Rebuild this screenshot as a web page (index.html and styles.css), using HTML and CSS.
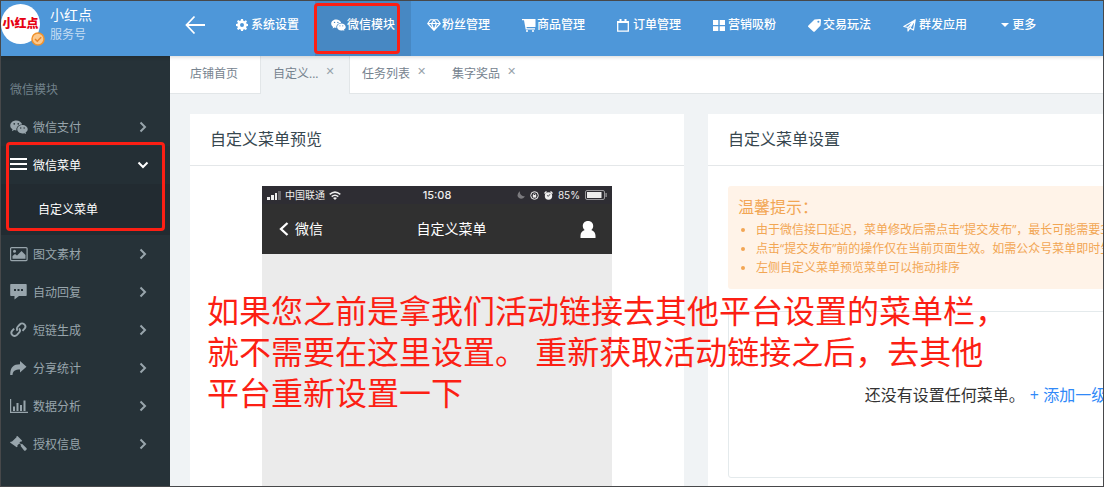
FILE: index.html
```html
<!DOCTYPE html>
<html lang="zh-CN">
<head>
<meta charset="utf-8">
<title>自定义菜单</title>
<link rel="stylesheet" href="styles.css">
</head>
<body>
<svg class="defs" aria-hidden="true">
  <symbol id="wechat" viewBox="0 0 36 28">
    <path fill-rule="evenodd" d="M12.500 1C5.800 1 .5 5.500.5 11c0 3.200 1.700 5.900 4.500 7.700L3.800 22.500l4.400-2.300c1.500.5 3 .7 4.800.7-1.400-6.500 4.200-12 11.400-12C23.300 4.400 18.400 1 12.500 1zM8.500 6a1.700 1.700 0 1 1 0 3.400a1.700 1.700 0 0 1 0-3.400zM16.500 6a1.700 1.700 0 1 1 0 3.400a1.700 1.700 0 0 1 0-3.400z"/>
    <path fill-rule="evenodd" d="M24.800 10.200c-5.900 0-10.300 3.900-10.300 8.500s4.600 8.400 10.300 8.400c1.300 0 2.600-.3 3.800-.6l3.500 1.500-.9-3c2.500-1.600 4.200-3.800 4.200-6.400 0-4.500-4.800-8.400-10.600-8.400zM21.500 14.500a1.400 1.400 0 1 1 0 2.800a1.400 1.400 0 0 1 0-2.800zM28.300 14.500a1.400 1.400 0 1 1 0 2.800a1.400 1.400 0 0 1 0-2.800z"/>
  </symbol>
  <symbol id="chevron" viewBox="0 0 8 12"><path d="M1.500 1.500 6 6l-4.500 4.500" fill="none" stroke="currentColor" stroke-width="2"/></symbol>
</svg>
<div class="app">
  <header class="topbar">
    <div class="account">
      <div class="avatar">小红点
        <svg class="verified" viewBox="0 0 14 14"><circle cx="7" cy="7" r="6" fill="#fdc98c" stroke="#f0932f" stroke-width="1.500"/><path d="m4 7 2.300 2.300 3.900-4" fill="none" stroke="#e8862a" stroke-width="1.500"/></svg>
      </div>
      <div class="account-text"><strong>小红点</strong><span>服务号</span></div>
    </div>
    <button class="back" aria-label="返回"><svg viewBox="0 0 20 20"><path d="M20 10H1.500M9.500 1.500 1.500 10l8 8.500" fill="none" stroke="currentColor" stroke-width="1.800"/></svg></button>
    <nav class="mainnav">
      <a href="#"><span class="ico"><svg width="12" height="12" viewBox="0 0 24 24"><path fill-rule="evenodd" d="M10 0h4l.6 3.600 2 .8L19.600 2.300l2.400 2.400-1.700 3 .8 2L24 10v4l-3 .6-.8 2 1.800 2.800-2.600 2.600-2.800-1.700-2 .8L14 24h-4l-.6-3-2-.8-2.800 1.800L2 19.400l1.700-2.800-.8-2L0 14v-4l3-.5.8-2L2 4.600 4.600 2l2.900 1.800 2-.8zM12 8a4 4 0 1 0 0 8a4 4 0 0 0 0-8z"/></svg></span>系统设置</a>
      <a href="#" class="active"><span class="ico wide"><svg width="15" height="12"><use href="#wechat"/></svg></span>微信模块</a>
      <a href="#"><span class="ico"><svg width="14" height="12" viewBox="0 0 28 24"><path d="M7 1.500h14L26.500 9 14 22.500 1.500 9zM1.500 9h25M14 2 9 9l5 13 5-13-5-7" fill="none" stroke="currentColor" stroke-width="2.400" stroke-linejoin="round"/></svg></span>粉丝管理</a>
      <a href="#"><span class="ico"><svg width="14" height="13" viewBox="0 0 14 13"><path d="M0 0h13.500v8H4.500l.3 1.300H13v1.200H3.700L2 1.300H0z"/><circle cx="5" cy="12" r="1"/><circle cx="11" cy="12" r="1"/></svg></span>商品管理</a>
      <a href="#"><span class="ico wide"><svg width="12" height="13" viewBox="0 0 12 13"><path d="M.7 3h10.600v9.200H.7z" fill="none" stroke="currentColor" stroke-width="1.300"/><path d="M0 2h12v2H0zM2.500 0h2v3h-2zM7.500 0h2v3h-2z"/></svg></span>订单管理</a>
      <a href="#"><span class="ico"><svg width="12" height="11" viewBox="0 0 12 11"><path d="M0 0h5.300v5H0zM6.700 0H12v5H6.700zM0 6.200h5.300v4.800H0zM6.700 6.200H12v4.800H6.700z"/></svg></span>营销吸粉</a>
      <a href="#"><span class="ico"><svg width="13" height="13" viewBox="0 0 13 13"><path fill-rule="evenodd" d="M6.500.5 12 0q1 0 1 1l-.4 5.500-5.800 6q-.8.7-1.600 0L.4 8q-.8-.8 0-1.600zM10.300 1.700a1 1 0 1 0 .1 2a1 1 0 0 0 0-2z"/></svg></span>交易玩法</a>
      <a href="#"><span class="ico wide"><svg width="13" height="13" viewBox="0 0 13 13"><path d="M.8 7.500 12.200.9l-1.700 10-3.600-1.700L5 12V8.500zM5 8.500l7-7.500-5 8" fill="none" stroke="currentColor" stroke-width="1.200" stroke-linejoin="round"/></svg></span>群发应用</a>
      <a href="#"><span class="ico small"><svg width="8" height="4" viewBox="0 0 8 4"><path d="M0 0h8L4 4z"/></svg></span>更多</a>
    </nav>
  </header>
  <div class="body">
    <aside class="sidebar">
      <h2>微信模块</h2>
      <ul>
        <li><a href="#"><svg class="lead" viewBox="0 0 36 28"><use href="#wechat"/></svg><span>微信支付</span><svg class="arrow"><use href="#chevron"/></svg></a></li>
        <li class="open"><a href="#"><svg class="lead" viewBox="0 0 18 16"><path d="M0 1h17v2H0zM0 6h17v2H0zM0 11h17v2H0z"/></svg><span>微信菜单</span><svg class="arrow down"><use href="#chevron"/></svg></a>
          <ul><li><a href="#"><span>自定义菜单</span></a></li></ul>
        </li>
        <li><a href="#"><svg class="lead" viewBox="0 0 18 16"><rect x=".6" y="1.600" width="16.500" height="13" rx="1" fill="none" stroke="currentColor" stroke-width="1.200"/><circle cx="4.500" cy="5.200" r="1.500"/><path d="M2.500 12.800V10L5 8l2 1.500L11.500 5l4 4v3.800z"/></svg><span>图文素材</span><svg class="arrow"><use href="#chevron"/></svg></a></li>
        <li><a href="#"><svg class="lead" viewBox="0 0 18 16"><path fill-rule="evenodd" d="M1 0h15q.7 0 .7.700v10.600q0 .7-.7.700H9l-4.500 3.500V12H1q-.8 0-.8-.7V.7Q.2 0 1 0zM4 5v2h2V5zM7.500 5v2h2V5zM11 5v2h2V5z"/></svg><span>自动回复</span><svg class="arrow"><use href="#chevron"/></svg></a></li>
        <li><a href="#"><svg class="lead" viewBox="0 0 18 16"><path d="M7.500 8.700C6.500 7 6.800 5.600 8 4.400l1.800-1.900c2.800-2.800 7.300.7 4.900 4L12.500 8.800M9 6.400c1.400 1.400 1.300 3 0 4.300l-2 2.200c-2.800 2.800-7.300-.7-4.900-4l2-2.200" fill="none" stroke="currentColor" stroke-width="1.900"/></svg><span>短链生成</span><svg class="arrow"><use href="#chevron"/></svg></a></li>
        <li><a href="#"><svg class="lead" viewBox="0 0 18 16"><path d="M10 1v3.200C3.500 4.200.2 7 .2 15h2.300c.3-4 2.500-5.600 7.500-5.600v3.200L16.500 6.700z"/></svg><span>分享统计</span><svg class="arrow"><use href="#chevron"/></svg></a></li>
        <li><a href="#"><svg class="lead" viewBox="0 0 18 16"><path d="M0 1h1.200v12.800H18V15H0zM3 8.500h2V13H3zM6.500 5h2v8h-2zM10 7h2v6h-2zM13.500 2.500h2V13h-2z"/></svg><span>数据分析</span><svg class="arrow"><use href="#chevron"/></svg></a></li>
        <li><a href="#"><svg class="lead" viewBox="0 0 18 16"><path d="m7.500 0 4.700 4.700-1 1-.6-.3-1.200 1.300 1.700 1.600.9-.6 4.600 4.500q.5.700-.2 1.500l-.8.800q-.8.700-1.500 0L10.600 10l.4-1-1.700-1.500-2 2.100.4.700-1 1L0 6.600l1-1 .8.200 4.700-4.600-.2-.6z"/></svg><span>授权信息</span><svg class="arrow"><use href="#chevron"/></svg></a></li>
      </ul>
    </aside>
    <main class="main">
      <div class="tabs">
        <div class="tab home"><a href="#">店铺首页</a></div>
        <div class="tab current"><a href="#">自定义...</a><button aria-label="关闭自定义菜单">✕</button></div>
        <div class="tab"><a href="#">任务列表</a><button aria-label="关闭任务列表">✕</button></div>
        <div class="tab"><a href="#">集字奖品</a><button aria-label="关闭集字奖品">✕</button></div>
      </div>
      <div class="panels">
        <section class="card">
          <h3>自定义菜单预览</h3>
          <div class="card-body">
            <div class="phone">
              <div class="status">
                <div class="status-left">
                  <svg width="14" height="9" viewBox="0 0 14 9"><path d="M0 6h3v3H0zM4 4h3v5H4zM8 2h2v7H8z"/><path d="M11 0h3v9h-3z" opacity=".3"/></svg>
                  <span>中国联通</span>
                  <svg width="12" height="9" viewBox="0 0 12 9"><path d="M.7 3.400q5.300-4.600 10.600 0M2.700 5.600q3.300-2.800 6.600 0" fill="none" stroke="currentColor" stroke-width="1.500"/><path d="M4 7q2-1.500 4 0L6 9z"/></svg>
                </div>
                <b>15:08</b>
                <div class="status-right">
                  <svg width="8" height="8" viewBox="0 0 8 8" opacity=".4"><path d="M3 0q-1 4.500 5 5.500Q5 9 2 7-1.500 4 3 0z"/></svg>
                  <svg width="9" height="9" viewBox="0 0 9 9"><circle cx="4.500" cy="4.500" r="3.800" fill="none" stroke="currentColor"/><path d="M2.800 4h3.400v2.600H2.800z"/><path d="M3.400 4V3q1.100-1.500 2.200 0v1" fill="none" stroke="currentColor" stroke-width=".7"/></svg>
                  <svg width="9" height="9" viewBox="0 0 9 9"><circle cx="4.500" cy="5" r="3.700"/><path d="m0 2 2-2 1 1-2 2zM9 2 7 0 6 1l2 2z"/><path d="M6 3.200 4.500 5.200 3 4.500" fill="none" stroke="#2e2d33" stroke-width=".8"/></svg>
                  <span>85%</span>
                  <svg width="22" height="10" viewBox="0 0 22 10"><rect x=".5" y=".5" width="19" height="9" rx="1.500" fill="none" stroke="#99989c"/><path d="M2 2h14.500v6H2z"/><path d="M20.500 3h1.200v4h-1.200z" opacity=".6"/></svg>
                </div>
              </div>
              <div class="phone-nav">
                <a href="#"><svg width="10" height="14" viewBox="0 0 10 14"><path d="M8.500 1 2 7l6.500 6" fill="none" stroke="currentColor" stroke-width="2.300"/></svg>微信</a>
                <span>自定义菜单</span>
                <svg width="16" height="17" viewBox="0 0 16 17"><path d="M8 0c3.300 0 5.200 2.200 5.200 5 0 1.600-.7 3-1.900 4 2.800 1 4.200 3.100 4.200 5.800V17H.5v-2.200C.5 12 1.900 10 4.700 9c-1.200-1-1.900-2.400-1.900-4C2.800 2.200 4.700 0 8 0z"/></svg>
              </div>
              <div class="phone-screen"></div>
            </div>
          </div>
        </section>
        <section class="card">
          <h3>自定义菜单设置</h3>
          <div class="card-body">
            <div class="tips">
              <h4>温馨提示：</h4>
              <ul>
                <li>由于微信接口延迟，菜单修改后需点击“提交发布”，最长可能需要3分钟</li>
                <li>点击“提交发布”前的操作仅在当前页面生效。如需公众号菜单即时生效</li>
                <li>左侧自定义菜单预览菜单可以拖动排序</li>
              </ul>
            </div>
            <div class="empty"><span>还没有设置任何菜单。</span><a href="#">+ 添加一级菜单</a></div>
          </div>
        </section>
      </div>
    </main>
  </div>
  <div class="mark mark-nav"></div>
  <div class="mark mark-side"></div>
  <p class="note">如果您之前是拿我们活动链接去其他平台设置的菜单栏，<br>就不需要在这里设置。 重新获取活动链接之后，去其他<br>平台重新设置一下</p>
</div>
</body>
</html>
```
FILE: styles.css
```css
* { box-sizing: border-box; }
body {
  margin: 0;
  font: 12px/20px "Open Sans", "Noto Sans CJK SC", sans-serif;
  color: #37474f;
}
a { color: inherit; text-decoration: none; }
button { border: 0; padding: 0; background: none; color: inherit; font: inherit; cursor: pointer; }
ul { list-style: none; margin: 0; padding: 0; }
h2, h3, h4, p { margin: 0; font-weight: 400; }
svg { fill: currentColor; flex: none; display: block; }
.defs { position: absolute; width: 0; height: 0; }

.app {
  position: relative;
  display: flex;
  flex-direction: column;
  height: 100vh;
  overflow: hidden;
  border: 1px solid #47484a;
}

/* Top bar */
.topbar {
  position: relative;
  z-index: 1;
  display: flex;
  flex: none;
  height: 55px;
  background: #4e97d9;
  color: #fff;
  box-shadow: 0 1px 4px rgba(0, 0, 0, .16);
}
.account { display: flex; gap: 10px; width: 184px; padding-top: 3px; }
.avatar {
  position: relative;
  width: 39px;
  height: 40px;
  border-radius: 50%;
  background: #fff;
  color: #e60012;
  font-size: 12px;
  font-weight: 900;
  line-height: 40px;
  text-align: center;
  white-space: nowrap;
}
.verified { position: absolute; right: -5px; bottom: -2px; width: 14px; height: 14px; }
.account-text { display: flex; flex-direction: column; }
.account-text strong { font-size: 14px; font-weight: 400; line-height: 22px; }
.account-text span { line-height: 18px; color: #c5ddf3; }
.back { width: 20px; height: 20px; margin: 14px 15px 0 0; }
.mainnav { display: flex; white-space: nowrap; }
.mainnav a { display: flex; padding: 14px 16px 0; font-weight: 500; }
.mainnav .active { background: #4788c3; }
.ico { display: flex; align-items: center; width: 15px; height: 20px; }
.ico.wide { width: 16px; }
.ico.small { width: 13px; padding-left: 2px; }

/* Side menu */
.body { display: flex; flex: 1; min-height: 0; }
.sidebar { flex: none; width: 169px; padding-top: 24px; background: #263238; color: #98a5ac; }
.sidebar h2 { height: 28px; padding-left: 9px; font-size: 12px; line-height: 20px; color: #71818a; }
.sidebar a { display: flex; align-items: center; height: 38px; padding: 0 23px 0 9px; }
.sidebar a span { padding-top: 2px; }
.lead { width: 18px; height: 16px; margin-right: 5px; }
.arrow { width: 8px; height: 12px; margin-left: auto; }
.arrow.down { transform: rotate(90deg); }
.open { background: #242f35; color: #fff; }
.open ul { padding: 6px 0 7px; background: #222b31; }
.open ul a { padding-left: 37px; }

/* Tabs */
.main { display: flex; flex: 1; flex-direction: column; min-width: 0; background: #f0f3f5; }
.tabs { display: flex; flex: none; height: 38px; background: #fff; border-bottom: 1px solid #e2e6e8; color: #76838f; }
.tab { display: flex; gap: 7px; width: 90px; height: 38px; padding: 8px 0 0 12px; white-space: nowrap; }
.tab.home { padding-left: 20px; }
.tab.current { background: #f0f3f5; border: solid #e2e6e8; border-width: 0 1px; }
.tab button { height: 16px; color: #98a3ab; font: 700 11px/16px "DejaVu Sans", sans-serif; }

/* Panels */
.panels {
  display: grid;
  flex: 1;
  grid-template-columns: minmax(494px, 5fr) minmax(588px, 6fr);
  gap: 24px;
  padding: 20px 20px 0;
  min-height: 0;
}
.card { background: #fff; min-width: 0; }
.card h3 { padding: 13px 20px 14px; border-bottom: 1px solid #e4e7e9; font-size: 16px; line-height: 24px; }
.card-body { padding: 20px; }

.phone { max-width: 350px; margin: 0 auto; background: #ebebeb; color: #fff; }
.status {
  display: grid;
  grid-template-columns: 1fr auto 1fr;
  align-items: center;
  height: 18px;
  padding: 0 5px;
  background: #2e2d33;
  color: #eee;
  font-size: 10px;
  line-height: 18px;
}
.status b { font: 500 11px/18px Inter, sans-serif; }
.status-left, .status-right { display: flex; align-items: center; gap: 5px; }
.status-left { gap: 4px; }
.status-right { justify-content: flex-end; font: 10px/18px Inter, sans-serif; }
.phone-nav {
  display: flex;
  align-items: center;
  justify-content: space-between;
  height: 50px;
  padding: 0 16px 0 17px;
  background: #303030;
  font-size: 14px;
}
.phone-nav a { display: flex; align-items: center; gap: 6px; }
.phone-screen { min-height: 400px; }

.tips { padding: 9px 10px 12px; border-radius: 3px; background: #fff3e8; color: #f2a654; white-space: nowrap; }
.tips h4 { font-size: 16px; line-height: 25px; }
.tips ul { padding-left: 18px; list-style: disc; line-height: 19px; }
.empty {
  display: flex;
  align-items: center;
  justify-content: center;
  gap: 5px;
  min-height: 167px;
  margin-top: 22px;
  border: 1px solid #e4eaec;
  border-radius: 3px;
  color: #333;
  font-size: 16px;
  white-space: nowrap;
}
.empty a { color: #3089f8; }

/* Annotations laid over the page */
.mark { position: absolute; z-index: 2; border: 3px solid #fc1f14; border-radius: 4px; pointer-events: none; }
.mark-nav { left: 313px; top: 2px; width: 86px; height: 51px; }
.mark-side { left: 5px; top: 141px; width: 159px; height: 89px; }
.note {
  position: absolute;
  z-index: 2;
  left: 206px;
  top: 289px;
  color: #fc1f14;
  font-size: 32px;
  font-weight: 400;
  line-height: 41px;
  white-space: nowrap;
}
```
